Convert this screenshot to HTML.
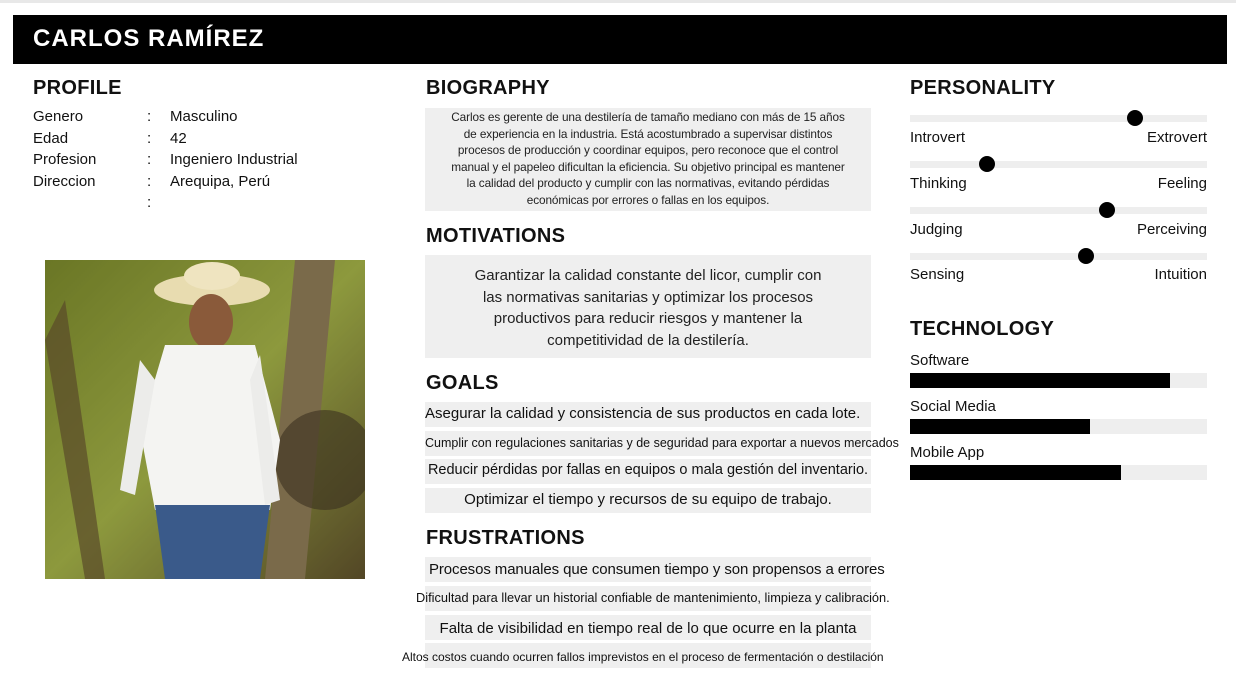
<!DOCTYPE html>
<html><head><meta charset="utf-8"><style>
*{margin:0;padding:0;box-sizing:border-box}
body{width:1236px;height:696px;background:#fff;font-family:"Liberation Sans",sans-serif;color:#111;position:relative;overflow:hidden}
.a{position:absolute}
.topline{left:0;top:0;width:1236px;height:3px;background:#e8e8e8}
.hdr{left:13px;top:15px;width:1214px;height:49px;background:#000;color:#fff;font-weight:bold;font-size:24px;letter-spacing:1px;padding:10px 0 0 20px}
h2{position:absolute;font-size:20px;font-weight:bold;letter-spacing:.3px}
.p{font-size:15px;line-height:21.5px}
.box{position:absolute;left:425px;width:446px;background:#efefef;text-align:center;white-space:nowrap}
.track{position:absolute;left:910px;width:297px;height:7px;background:#eee}
.dot{position:absolute;width:16px;height:16px;border-radius:50%;background:#000}
.lab{position:absolute;font-size:15px}
.tt{position:absolute;left:910px;width:297px;height:15px;background:#eee}
.tf{position:absolute;left:0;top:0;height:15px;background:#000}
</style></head><body>
<div class="a topline"></div>
<div class="a hdr">CARLOS RAMÍREZ</div>

<h2 style="left:33px;top:77px">PROFILE</h2>
<div class="a p" style="left:33px;top:106px">Genero<br>Edad<br>Profesion<br>Direccion</div>
<div class="a p" style="left:147px;top:106px">:<br>:<br>:<br>:<br>:</div>
<div class="a p" style="left:170px;top:106px">Masculino<br>42<br>Ingeniero Industrial<br>Arequipa, Perú</div>

<svg class="a" style="left:45px;top:260px" width="320" height="319" viewBox="0 0 320 319">
<defs><linearGradient id="bg" x1="0" y1="0" x2="1" y2="1"><stop offset="0" stop-color="#7a8a2a"/><stop offset=".5" stop-color="#a8b84a"/><stop offset="1" stop-color="#5a4a2a"/></linearGradient></defs>
<rect width="320" height="319" fill="url(#bg)"/>
<rect x="0" y="0" width="320" height="319" fill="#3c3a18" opacity=".25"/>
<path d="M250 0 L290 0 L260 319 L220 319 Z" fill="#7a6a4a"/>
<path d="M20 40 L60 319 L40 319 L0 80 Z" fill="#5a4a2a" opacity=".7"/>
<circle cx="280" cy="200" r="50" fill="#3a3020" opacity=".6"/>
<ellipse cx="167" cy="30" rx="58" ry="16" fill="#e8dcb0"/>
<ellipse cx="167" cy="16" rx="28" ry="14" fill="#efe4c0"/>
<ellipse cx="166" cy="62" rx="22" ry="28" fill="#8a5a3a"/>
<path d="M120 85 L210 85 L235 180 L225 250 L110 250 L95 170 Z" fill="#f4f4f2"/>
<path d="M95 100 L75 230 L90 235 L110 120 Z" fill="#ececea"/>
<path d="M215 95 L235 240 L220 245 L205 120 Z" fill="#ececea"/>
<path d="M110 245 L225 245 L215 319 L120 319 Z" fill="#3a5a8a"/>
</svg>

<h2 style="left:426px;top:77px">BIOGRAPHY</h2>
<div class="box" style="top:108px;height:103px;font-size:11.8px;line-height:16.5px;padding-top:1px;color:#222;letter-spacing:-.1px">Carlos es gerente de una destilería de tamaño mediano con más de 15 años<br>de experiencia en la industria. Está acostumbrado a supervisar distintos<br>procesos de producción y coordinar equipos, pero reconoce que el control<br>manual y el papeleo dificultan la eficiencia. Su objetivo principal es mantener<br>la calidad del producto y cumplir con las normativas, evitando pérdidas<br>económicas por errores o fallas en los equipos.</div>

<h2 style="left:426px;top:225px">MOTIVATIONS</h2>
<div class="box" style="top:255px;height:103px;font-size:15px;line-height:21.5px;padding-top:10px;color:#222">Garantizar la calidad constante del licor, cumplir con<br>las normativas sanitarias y optimizar los procesos<br>productivos para reducir riesgos y mantener la<br>competitividad de la destilería.</div>

<h2 style="left:426px;top:372px">GOALS</h2>
<div class="box" style="top:402px;height:25px;font-size:15px;line-height:23px;text-align:left">Asegurar la calidad y consistencia de sus productos en cada lote.</div>
<div class="box" style="top:431px;height:25px;font-size:12.5px;line-height:24px;text-align:left;overflow:visible">Cumplir con regulaciones sanitarias y de seguridad para exportar a nuevos mercados</div>
<div class="box" style="top:459px;height:25px;font-size:14.5px;line-height:23px">Reducir pérdidas por fallas en equipos o mala gestión del inventario.</div>
<div class="box" style="top:488px;height:25px;font-size:15px;line-height:23px">Optimizar el tiempo y recursos de su equipo de trabajo.</div>

<h2 style="left:426px;top:527px">FRUSTRATIONS</h2>
<div class="box" style="top:557px;height:25px;font-size:15px;line-height:25px;overflow:visible"><span style="position:absolute;left:4px;letter-spacing:-.1px">Procesos manuales que consumen tiempo y son propensos a errores</span></div>
<div class="box" style="top:586px;height:25px;font-size:12.8px;line-height:24px;overflow:visible"><span style="position:absolute;left:-9px">Dificultad para llevar un historial confiable de mantenimiento, limpieza y calibración.</span></div>
<div class="box" style="top:615px;height:25px;font-size:15px;line-height:28px">Falta de visibilidad en tiempo real de lo que ocurre en la planta</div>
<div class="box" style="top:643px;height:25px;font-size:12px;line-height:28px;overflow:visible"><span style="position:absolute;left:-23px">Altos costos cuando ocurren fallos imprevistos en el proceso de fermentación o destilación</span></div>

<h2 style="left:910px;top:77px">PERSONALITY</h2>
<div class="track" style="top:115px"></div><div class="dot" style="left:1127px;top:110px"></div>
<div class="lab" style="left:910px;top:129px">Introvert</div><div class="lab" style="right:29px;top:129px">Extrovert</div>
<div class="track" style="top:161px"></div><div class="dot" style="left:979px;top:156px"></div>
<div class="lab" style="left:910px;top:175px">Thinking</div><div class="lab" style="right:29px;top:175px">Feeling</div>
<div class="track" style="top:207px"></div><div class="dot" style="left:1099px;top:202px"></div>
<div class="lab" style="left:910px;top:221px">Judging</div><div class="lab" style="right:29px;top:221px">Perceiving</div>
<div class="track" style="top:253px"></div><div class="dot" style="left:1078px;top:248px"></div>
<div class="lab" style="left:910px;top:266px">Sensing</div><div class="lab" style="right:29px;top:266px">Intuition</div>

<h2 style="left:910px;top:318px">TECHNOLOGY</h2>
<div class="lab" style="left:910px;top:352px">Software</div>
<div class="tt" style="top:373px"><div class="tf" style="width:260px"></div></div>
<div class="lab" style="left:910px;top:398px">Social Media</div>
<div class="tt" style="top:419px"><div class="tf" style="width:180px"></div></div>
<div class="lab" style="left:910px;top:444px">Mobile App</div>
<div class="tt" style="top:465px"><div class="tf" style="width:211px"></div></div>
</body></html>
